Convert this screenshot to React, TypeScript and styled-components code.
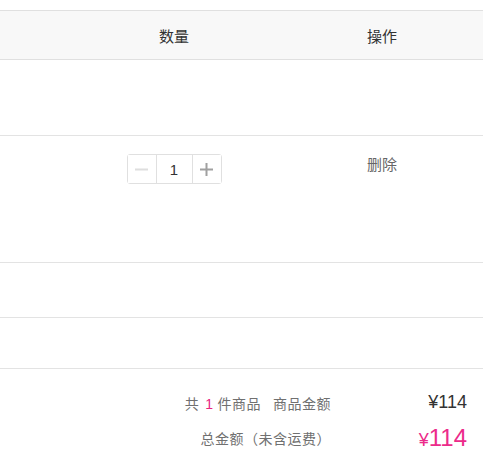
import styled, { createGlobalStyle } from "styled-components";

const GlobalStyle = createGlobalStyle`
  * {
    box-sizing: border-box;
  }
  body {
    margin: 0;
    background: #fff;
    font-family: "Liberation Sans", "Noto Sans CJK SC", sans-serif;
    color: #333;
  }
`;

const Cart = styled.div`
  width: 483px;
  padding-top: 10px;
`;

const Columns = `
  display: grid;
  grid-template-columns: 120px 108px 100px 108px 1fr;
`;

const HeadRow = styled.div`
  ${Columns}
  height: 50px;
  align-items: center;
  background: #f8f8f8;
  border-top: 1px solid #e0e0e0;
  border-bottom: 1px solid #e0e0e0;
  font-size: 15px;
  color: #333;
`;

const HeadCell = styled.div<{ $col: number }>`
  grid-column: ${(p) => p.$col};
  text-align: center;
`;

const Row = styled.div<{ $height: number }>`
  ${Columns}
  height: ${(p) => p.$height}px;
  padding-top: 18px;
  align-items: start;
  border-bottom: 1px solid #e3e3e3;
`;

const Cell = styled.div<{ $col: number }>`
  grid-column: ${(p) => p.$col};
  display: flex;
  justify-content: center;
`;

const Stepper = styled.div`
  display: flex;
  height: 30px;
  border: 1px solid #e0e0e0;
  border-radius: 3px;
`;

const StepBtn = styled.button<{ $disabled?: boolean }>`
  width: 28px;
  padding: 0;
  border: none;
  background: #fff;
  display: flex;
  align-items: center;
  justify-content: center;
  color: ${(p) => (p.$disabled ? "#dedede" : "#a0a0a0")};
  cursor: ${(p) => (p.$disabled ? "not-allowed" : "pointer")};
`;

const Count = styled.div`
  width: 37px;
  border-left: 1px solid #e0e0e0;
  border-right: 1px solid #e0e0e0;
  display: flex;
  align-items: center;
  justify-content: center;
  font-size: 15px;
  color: #333;
`;

const Remove = styled.span`
  font-size: 15px;
  line-height: 22px;
  color: #666;
  cursor: pointer;
`;

const Summary = styled.div`
  display: grid;
  grid-template-columns: 1fr 136px;
  grid-auto-rows: 35px;
  align-items: center;
  padding: 16px 16px 0 0;
`;

const Label = styled.div`
  text-align: right;
  font-size: 14px;
  letter-spacing: 0.5px;
  color: #707070;
`;

const Gap = styled.span`
  display: inline-block;
  width: 12px;
`;

const Pink = styled.span`
  margin: 0 4px 0 6px;
  color: #e8247f;
`;

const Value = styled.div<{ $big?: boolean }>`
  text-align: right;
  font-size: ${(p) => (p.$big ? "24px" : "18px")};
  color: ${(p) => (p.$big ? "#ec2a8a" : "#333")};
`;

const Yen = styled.span`
  font-size: 18px;
`;

function MinusIcon() {
  return (
    <svg width="13" height="13" viewBox="0 0 13 13">
      <rect x="0" y="5.5" width="13" height="2" fill="currentColor" />
    </svg>
  );
}

function PlusIcon() {
  return (
    <svg width="13" height="13" viewBox="0 0 13 13">
      <rect x="0" y="5.5" width="13" height="2" fill="currentColor" />
      <rect x="5.5" y="0" width="2" height="13" fill="currentColor" />
    </svg>
  );
}

export default function App() {
  const count = 1;
  const price = 114;

  return (
    <>
      <GlobalStyle />
      <Cart>
        <HeadRow>
          <HeadCell $col={2}>数量</HeadCell>
          <HeadCell $col={4}>操作</HeadCell>
        </HeadRow>
        <Row $height={76} />
        <Row $height={127}>
          <Cell $col={2}>
            <Stepper>
              <StepBtn $disabled>
                <MinusIcon />
              </StepBtn>
              <Count>{count}</Count>
              <StepBtn>
                <PlusIcon />
              </StepBtn>
            </Stepper>
          </Cell>
          <Cell $col={4}>
            <Remove>删除</Remove>
          </Cell>
        </Row>
        <Row $height={55} />
        <Row $height={51} />
        <Summary>
          <Label>
            共<Pink>{count}</Pink>件商品<Gap />商品金额
          </Label>
          <Value>¥{price}</Value>
          <Label>总金额（未含运费）</Label>
          <Value $big>
            <Yen>¥</Yen>
            {price}
          </Value>
        </Summary>
      </Cart>
    </>
  );
}
